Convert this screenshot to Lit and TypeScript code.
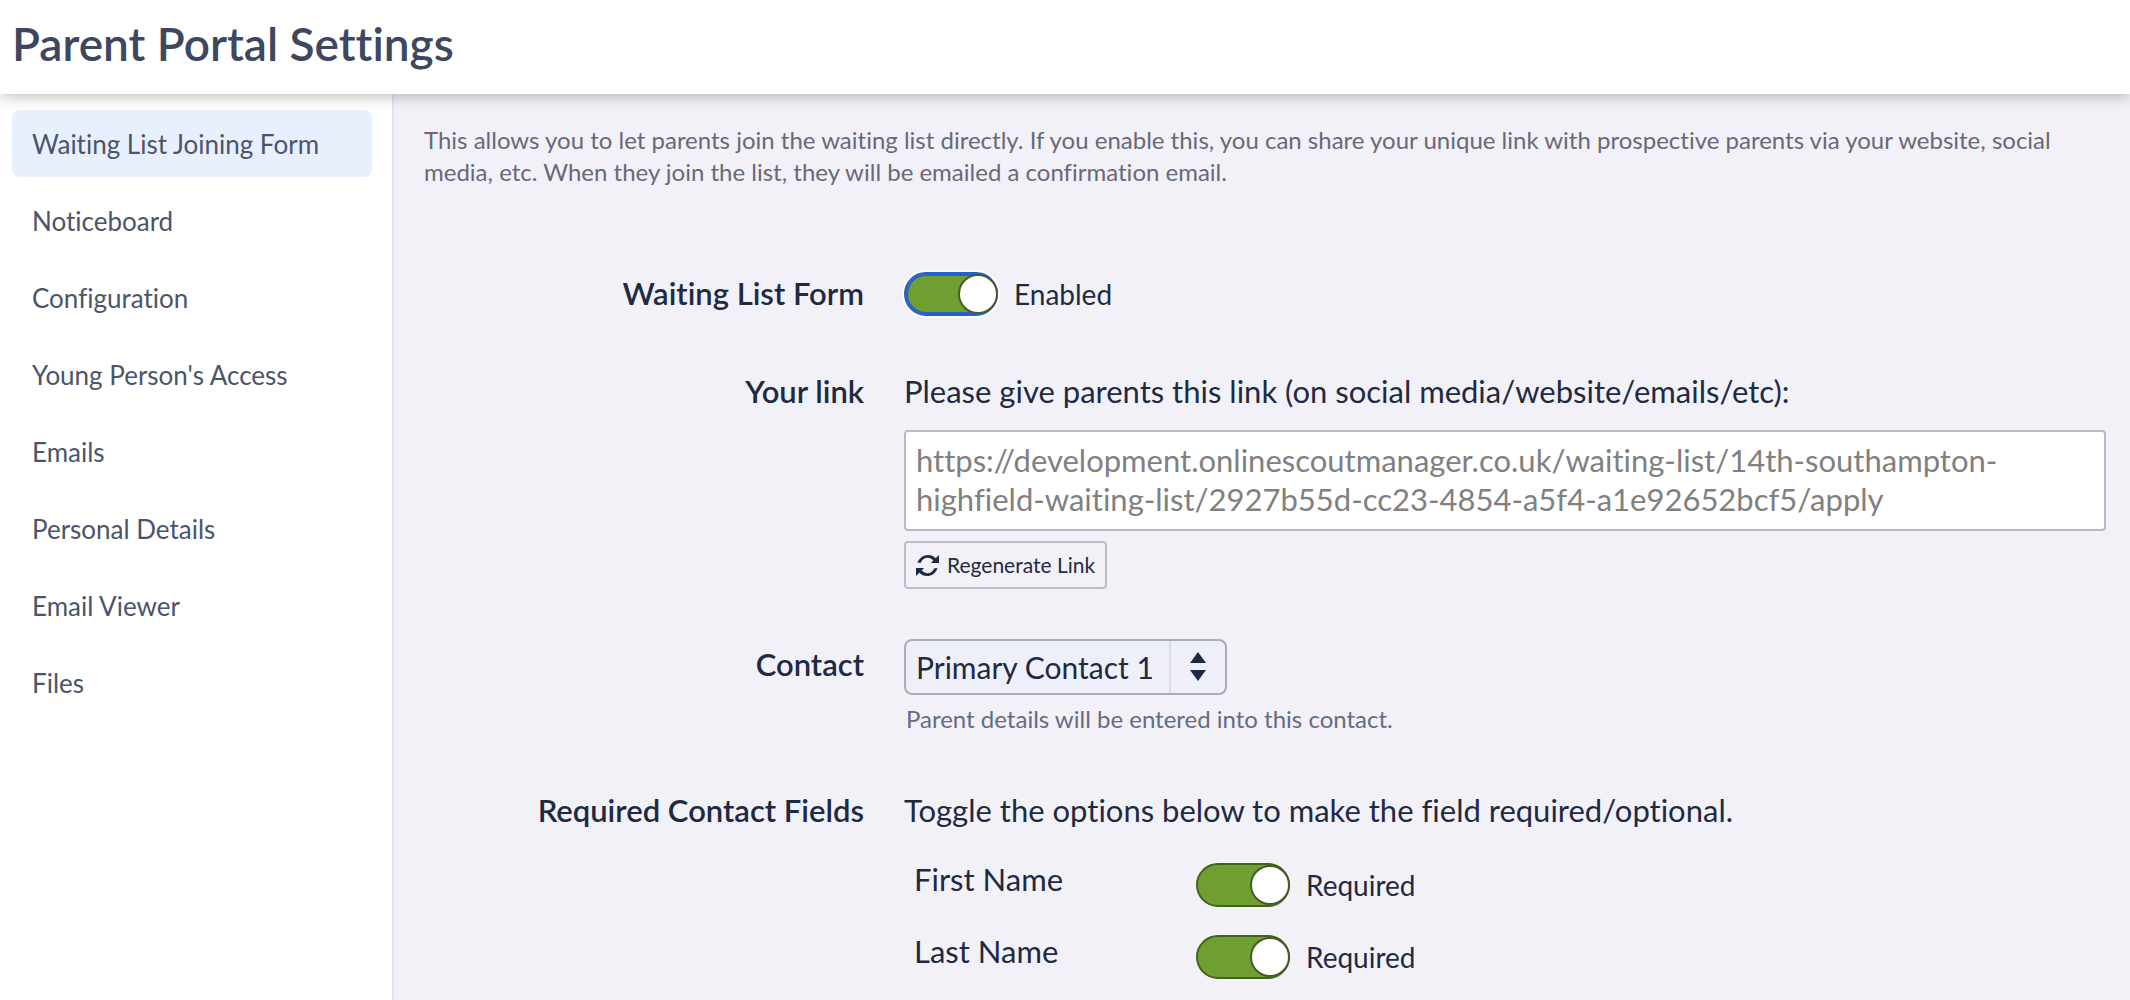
import { LitElement, html, css, svg } from "lit";
import { customElement, property } from "lit/decorators.js";
import { classMap } from "lit/directives/class-map.js";

const NAV_ITEMS = [
  "Waiting List Joining Form",
  "Noticeboard",
  "Configuration",
  "Young Person's Access",
  "Emails",
  "Personal Details",
  "Email Viewer",
  "Files",
];

const CONTACT_FIELDS = ["First Name", "Last Name"];

const FORM_LINK =
  "https://development.onlinescoutmanager.co.uk/waiting-list/14th-southampton-highfield-waiting-list/2927b55d-cc23-4854-a5f4-a1e92652bcf5/apply";

@customElement("toggle-switch")
export class ToggleSwitch extends LitElement {
  @property() text = "";
  @property() name = "";
  @property({ type: Boolean }) highlighted = false;

  static styles = css`
    :host {
      display: block;
    }
    .toggle {
      display: flex;
      align-items: center;
      gap: 16px;
      width: fit-content;
      font-size: 28px;
      line-height: 42px;
      color: #1e2a42;
      cursor: pointer;
    }
    .switch {
      appearance: none;
      box-sizing: border-box;
      display: flex;
      align-items: center;
      width: 94px;
      height: 44px;
      margin: 0;
      border: 2px solid #9aa0ac;
      border-radius: 22px;
      background: #c9ccd6;
      cursor: pointer;
      outline: none;
    }
    .switch::before {
      content: "";
      box-sizing: border-box;
      width: 40px;
      height: 40px;
      margin: 0 -2px;
      border: 2px solid #475a2b;
      border-radius: 50%;
      background: #ffffff;
    }
    .switch:checked {
      justify-content: flex-end;
      border-color: #40651a;
      background: #6f9f31;
    }
    .switch.highlighted {
      border-color: #2860cb;
      box-shadow:
        inset 0 0 0 2px #2860cb,
        0 0 0 2px #fdfdff;
    }
  `;

  render() {
    return html`
      <label class="toggle">
        <input
          class=${classMap({ switch: true, highlighted: this.highlighted })}
          type="checkbox"
          role="switch"
          aria-label=${this.name}
          checked
        />
        <span>${this.text}</span>
      </label>
    `;
  }
}

@customElement("app-root")
export class AppRoot extends LitElement {
  static styles = css`
    :host {
      display: flex;
      flex-direction: column;
      min-height: 100vh;
      background: #f2f1f8;
      color: #1e2a42;
      font-family: Lato, "Open Sans", sans-serif;
      font-size: 31px;
      line-height: 42px;
      font-variant-ligatures: none;
    }
    .header {
      position: relative;
      z-index: 1;
      padding: 12px 12px 18px;
      background: #ffffff;
      box-shadow: 0 2px 14px rgba(0, 0, 0, 0.28);
    }
    .title {
      margin: 0;
      font-size: 46px;
      line-height: 64px;
      font-weight: 600;
      color: #3d4860;
    }
    .layout {
      flex: 1;
      display: flex;
    }
    .sidebar {
      box-sizing: border-box;
      flex: none;
      width: 394px;
      padding: 16px 20px 16px 12px;
      border-right: 2px solid #e5e5e7;
      background: #ffffff;
    }
    .nav-list {
      display: flex;
      flex-direction: column;
      gap: 10px;
      margin: 0;
      padding: 0;
      list-style: none;
    }
    .nav-link {
      display: block;
      padding: 16px 20px 15px;
      border-radius: 8px;
      font-size: 26px;
      line-height: 36px;
      color: #4b556a;
      text-decoration: none;
    }
    .nav-link.active {
      background: #e8f0fd;
    }
    .main {
      flex: 1;
      min-width: 0;
      padding: 30px 24px 20px 30px;
    }
    .intro {
      margin: 0 0 84px;
      font-size: 24px;
      line-height: 32px;
      color: #696879;
    }
    .form {
      display: flex;
      flex-direction: column;
      gap: 54px;
    }
    .row {
      display: grid;
      grid-template-columns: 440px minmax(0, 1fr);
      column-gap: 40px;
    }
    .row-label {
      font-weight: 600;
      text-align: right;
    }
    .row-text {
      margin: 0;
    }
    .link-box {
      box-sizing: border-box;
      display: block;
      width: 100%;
      height: 101px;
      margin: 18px 0 10px;
      padding: 9px 10px;
      border: 2px solid #b6bbc7;
      border-radius: 4px;
      background: #ffffff;
      color: #808080;
      font: inherit;
      line-height: 39px;
      resize: none;
      overflow: hidden;
    }
    .button {
      display: flex;
      align-items: center;
      gap: 8px;
      box-sizing: border-box;
      width: fit-content;
      height: 48px;
      padding: 0 10px;
      border: 2px solid #b8bfca;
      border-radius: 4px;
      background: transparent;
      color: inherit;
      font: inherit;
      font-size: 21px;
      line-height: 28px;
      cursor: pointer;
    }
    .button-icon {
      width: 23px;
      height: 23px;
      fill: none;
      stroke: #1e2a42;
    }
    .select-wrap {
      display: grid;
      grid-template-columns: auto 58px;
      width: fit-content;
      margin-top: -4px;
    }
    .select {
      grid-area: 1 / 1 / 2 / 3;
      appearance: none;
      box-sizing: border-box;
      height: 56px;
      padding: 0 70px 0 10px;
      border: 2px solid #a9adb8;
      border-radius: 8px;
      background: #eeeff8;
      color: inherit;
      font: inherit;
      font-size: 30px;
    }
    .select-arrows {
      grid-area: 1 / 2;
      box-sizing: border-box;
      width: 56px;
      height: 52px;
      align-self: center;
      border-left: 2px solid #dcdde3;
      pointer-events: none;
      fill: #1e2a42;
    }
    .help {
      margin: 8px 2px 0;
      font-size: 24px;
      line-height: 32px;
      color: #636c80;
    }
    .fields {
      display: flex;
      flex-direction: column;
      gap: 28px;
      margin-top: 32px;
      padding-left: 10px;
    }
    .field {
      display: grid;
      grid-template-columns: 282px minmax(0, 1fr);
    }
    .field-name {
      line-height: 32px;
    }
  `;

  private renderRegenerateIcon() {
    return svg`
      <svg class="button-icon" viewBox="0 0 24 24" aria-hidden="true">
        <path d="M1.5 9.2C4.5 0.8 14.5 -1.8 21 4.8L18.6 7.2C14 2.2 7.4 3.2 5 9.2Z" fill="#1e2a42" stroke="none" />
        <path d="M22.5 14.8C19.5 23.2 9.5 25.8 3 19.2L5.4 16.8C10 21.8 16.6 20.8 19 14.8Z" fill="#1e2a42" stroke="none" />
        <path d="M24 1V9.5H15.5Z" fill="#1e2a42" stroke="none" />
        <path d="M0 23V14.5H8.5Z" fill="#1e2a42" stroke="none" />
      </svg>
    `;
  }

  render() {
    return html`
      <header class="header">
        <h1 class="title">Parent Portal Settings</h1>
      </header>
      <div class="layout">
        <nav class="sidebar">
          <ul class="nav-list">
            ${NAV_ITEMS.map(
              (item, index) => html`
                <li>
                  <a
                    href="#"
                    class=${classMap({ "nav-link": true, active: index === 0 })}
                    >${item}</a
                  >
                </li>
              `
            )}
          </ul>
        </nav>
        <main class="main">
          <p class="intro">
            This allows you to let parents join the waiting list directly. If
            you enable this, you can share your unique link with prospective
            parents via your website, social media, etc. When they join the
            list, they will be emailed a confirmation email.
          </p>
          <form class="form">
            <div class="row">
              <span class="row-label">Waiting List Form</span>
              <toggle-switch
                name="Waiting List Form"
                text="Enabled"
                highlighted
              ></toggle-switch>
            </div>
            <div class="row">
              <label class="row-label" for="link">Your link</label>
              <div>
                <p class="row-text">
                  Please give parents this link (on social
                  media/website/emails/etc):
                </p>
                <textarea
                  id="link"
                  class="link-box"
                  readonly
                  spellcheck="false"
                  .value=${FORM_LINK}
                ></textarea>
                <button class="button" type="button">
                  ${this.renderRegenerateIcon()}
                  <span>Regenerate Link</span>
                </button>
              </div>
            </div>
            <div class="row">
              <label class="row-label" for="contact">Contact</label>
              <div>
                <div class="select-wrap">
                  <select id="contact" class="select">
                    <option>Primary Contact 1</option>
                  </select>
                  <svg
                    class="select-arrows"
                    viewBox="0 0 52 52"
                    aria-hidden="true"
                  >
                    <path d="M26 11L34 22H18Z" />
                    <path d="M26 40L34 29H18Z" />
                  </svg>
                </div>
                <p class="help">
                  Parent details will be entered into this contact.
                </p>
              </div>
            </div>
            <div class="row">
              <span class="row-label">Required Contact Fields</span>
              <div>
                <p class="row-text">
                  Toggle the options below to make the field required/optional.
                </p>
                <div class="fields">
                  ${CONTACT_FIELDS.map(
                    (field) => html`
                      <div class="field">
                        <span class="field-name">${field}</span>
                        <toggle-switch
                          name=${field}
                          text="Required"
                        ></toggle-switch>
                      </div>
                    `
                  )}
                </div>
              </div>
            </div>
          </form>
        </main>
      </div>
    `;
  }
}
